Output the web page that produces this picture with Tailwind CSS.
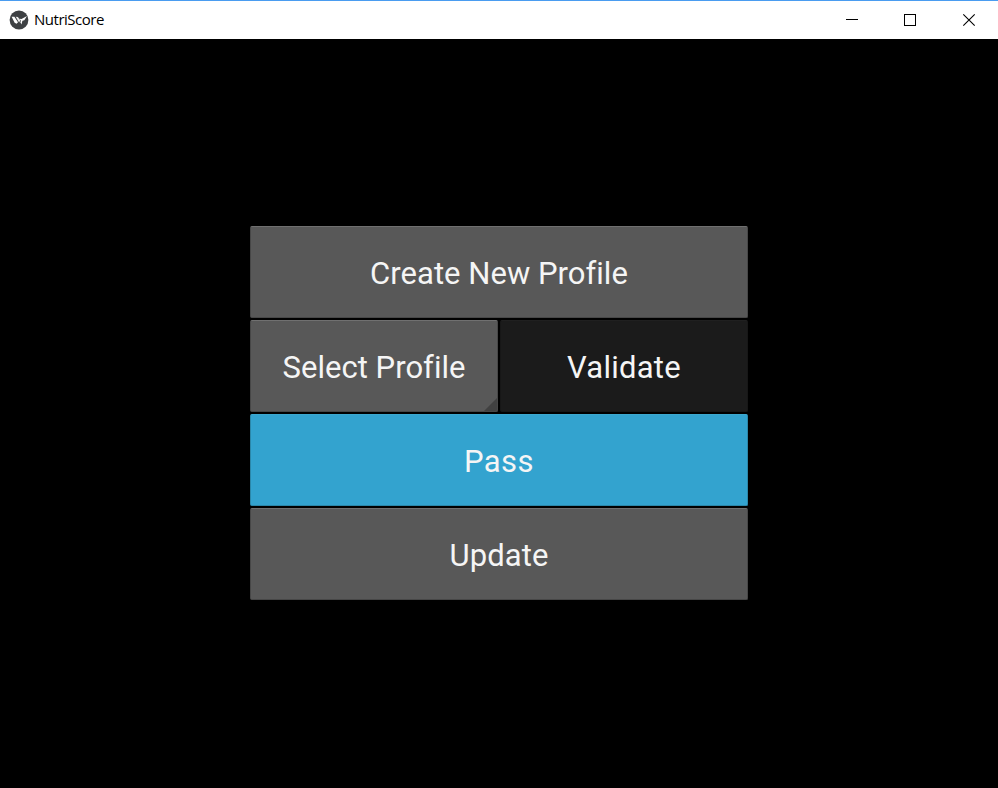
<!DOCTYPE html>
<html lang="en">
<head>
<meta charset="utf-8">
<title>NutriScore</title>
<script src="https://cdn.jsdelivr.net/npm/@tailwindcss/browser@4"></script>
</head>
<body class="h-[788px] w-[998px] overflow-hidden bg-black flex flex-col font-['Roboto',sans-serif]">
<header class="h-[39px] shrink-0 bg-white border-t border-[#4a9cf0] flex items-center">
  <svg class="ml-[9px] size-5 shrink-0" viewBox="0 0 20 20">
    <circle cx="10" cy="10" r="9.4" fill="#3d4043"/>
    <path d="M2.600 6.800H5.400L9 12.200 7.600 13.800 5.600 12.700Z" fill="#fff"/>
    <path d="M6.700 6.800 8.900 7 11.300 10.200 10.100 12.500Z" fill="#eee"/>
    <path d="M10.400 8.800 12.500 9 18 6 15.300 10.300 13.400 10.800 12.500 14.400 11.300 12.200 12 10.700Z" fill="#fff"/>
  </svg>
  <span class="ml-[5px] pb-0.5 text-[15px] leading-5 text-black font-['Open_Sans',sans-serif] tracking-[-0.48px]">NutriScore</span>
  <div class="ml-auto flex h-full w-[175px] items-center">
    <svg class="h-full w-full" viewBox="0 0 175 38" fill="none" stroke="#000" shape-rendering="crispEdges">
      <path d="M23 18.5H35M81.5 13.5H92.500V24.500H81.500Z"/>
      <path d="M140.300 13.300 151.700 24.700M151.700 13.300 140.300 24.700" shape-rendering="auto" stroke-width="1.100"/>
    </svg>
  </div>
</header>
<main class="flex flex-1 flex-col pt-[187px] pl-[250px] text-[31px] text-[#f5f5f5]">
  <div class="flex w-[498px] flex-col gap-0.5">
    <button class="h-[92px] rounded-[2px] border border-[#474747] border-t-[#707070] bg-[#585858] pt-1"><span class="tracking-[0.03px]">Create New Profile</span></button>
    <div class="flex h-[92px] gap-0.5">
      <button class="relative w-[248px] overflow-hidden rounded-[2px] border border-[#474747] border-t-[#707070] bg-[#585858] pt-1"><span class="tracking-[0.03px]">Select Profile</span>
        <svg class="absolute right-0 bottom-0 size-[13px]" viewBox="0 0 14 14"><path d="M14 0V14H0Z" fill="#414141"/></svg>
      </button>
      <button class="w-[248px] rounded-[2px] border border-[#171717] border-t-[#202020] bg-[#1b1b1b] pt-1"><span class="tracking-[0.25px]">Validate</span></button>
    </div>
    <button class="h-[92px] rounded-[2px] border border-[#2b87a9] border-t-[#3ba8d0] bg-[#33a3cf] pt-1"><span class="tracking-[0.4px]">Pass</span></button>
    <button class="h-[92px] rounded-[2px] border border-[#474747] border-t-[#707070] bg-[#585858] pt-1"><span class="tracking-[0.08px]">Update</span></button>
  </div>
</main>
</body>
</html>
